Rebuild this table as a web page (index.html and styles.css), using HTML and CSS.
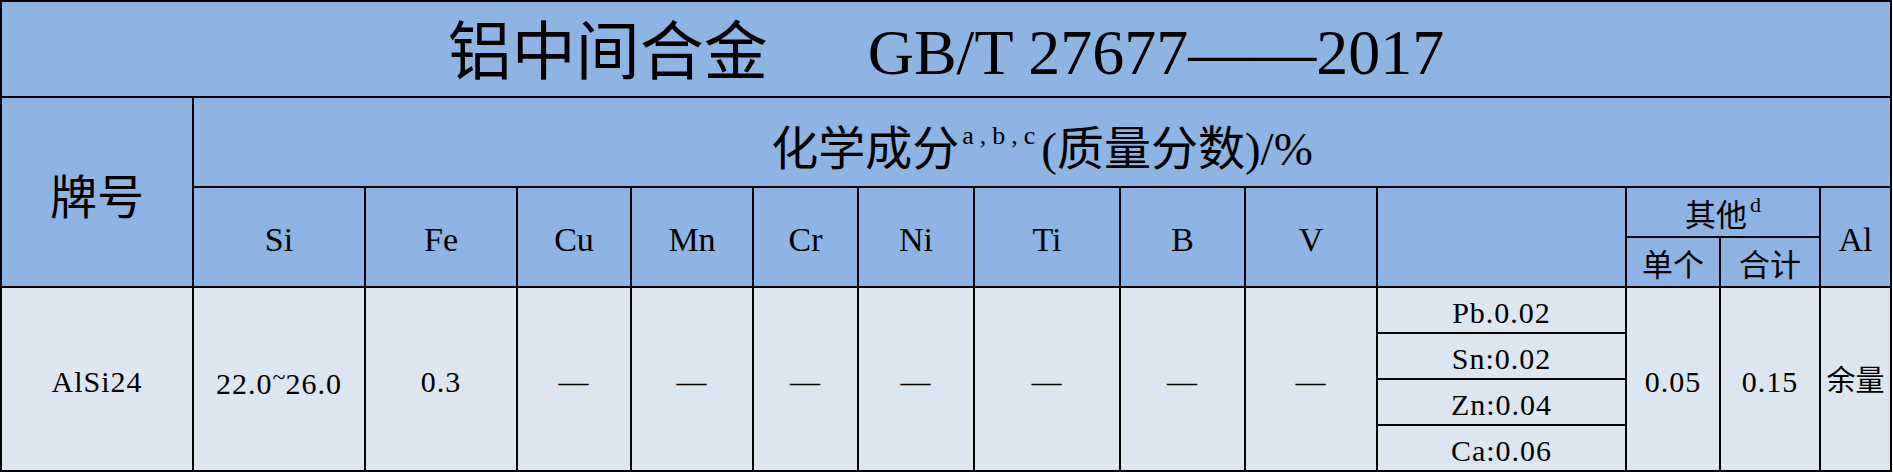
FILE: index.html
```html
<!DOCTYPE html>
<html lang="zh-CN">
<head>
<meta charset="utf-8">
<title>铝中间合金 GB/T 27677——2017</title>
<link rel="stylesheet" href="styles.css">
</head>
<body>
<div class="sheet">
  <div class="cell hd title c14"><span>铝中间合金</span><span>GB/T 27677——2017</span></div>

  <div class="cell hd big r3 up6">牌号</div>
  <div class="cell hd big c13 up8"><span>化学成分<span class="sup sup-abc">a,b,c</span>(质量分数)/%</span></div>

  <div class="cell hd col r2">Si</div>
  <div class="cell hd col r2">Fe</div>
  <div class="cell hd col r2">Cu</div>
  <div class="cell hd col r2">Mn</div>
  <div class="cell hd col r2">Cr</div>
  <div class="cell hd col r2">Ni</div>
  <div class="cell hd col r2">Ti</div>
  <div class="cell hd col r2">B</div>
  <div class="cell hd col r2">V</div>
  <div class="cell hd r2"></div>
  <div class="cell hd cjk c2"><span>其他<span class="sup sup-d">d</span></span></div>
  <div class="cell hd col r2">Al</div>
  <div class="cell hd cjk">单个</div>
  <div class="cell hd cjk">合计</div>

  <div class="cell dt r4">AlSi24</div>
  <div class="cell dt r4"><span>22.0<span class="tilde">~</span>26.0</span></div>
  <div class="cell dt r4">0.3</div>
  <div class="cell dt r4">—</div>
  <div class="cell dt r4">—</div>
  <div class="cell dt r4">—</div>
  <div class="cell dt r4">—</div>
  <div class="cell dt r4">—</div>
  <div class="cell dt r4">—</div>
  <div class="cell dt r4">—</div>
  <div class="cell dt">Pb.0.02</div>
  <div class="cell dt r4">0.05</div>
  <div class="cell dt r4">0.15</div>
  <div class="cell dt r4 cjkd">余量</div>
  <div class="cell dt">Sn:0.02</div>
  <div class="cell dt">Zn:0.04</div>
  <div class="cell dt">Ca:0.06</div>
</div>
</body>
</html>
```

FILE: styles.css
```css
html, body {
  margin: 0;
  padding: 0;
  background: #ffffff;
}

body {
  font-family: "Liberation Serif", "Noto Sans CJK SC", serif;
  color: #000000;
}

.sheet {
  width: 1892px;
  height: 472px;
  box-sizing: border-box;
  padding: 2px;
  display: grid;
  gap: 2px;
  background: #000000;
  grid-template-columns: 190px 170px 150px 112px 120px 103px 114px 144px 123px 130px 247px 92px 98px 69px;
  grid-template-rows: 94px 88px 48px 48px 44px 44px 44px 44px;
}

.cell {
  display: flex;
  align-items: center;
  justify-content: center;
  line-height: 1;
  white-space: nowrap;
  padding-top: 5px;
  box-sizing: border-box;
}

.hd {
  background: #8eb4e3;
}

.dt {
  background: #dce6f1;
  font-size: 30px;
  letter-spacing: 1px;
}

.c14 { grid-column: span 14; }
.c13 { grid-column: span 13; }
.c2 { grid-column: span 2; }
.r2 { grid-row: span 2; }
.r3 { grid-row: span 3; }
.r4 { grid-row: span 4; }

.title {
  font-size: 64px;
  gap: 100px;
  padding-top: 8px;
}

.big {
  font-size: 47px;
}

.up6 { padding-top: 12px; }
.up8 { padding-top: 14px; }

.col {
  font-size: 34px;
}

.cjk {
  font-size: 31px;
  padding-top: 7px;
}

.cjkd {
  font-size: 29px;
  letter-spacing: 0;
}

.sup {
  line-height: 0;
}

.sup-abc {
  font-size: 26px;
  letter-spacing: 6px;
  vertical-align: 21px;
  margin-left: 3px;
}

.sup-d {
  font-size: 22px;
  vertical-align: 14px;
  margin-left: 3px;
}

.tilde {
  display: inline-block;
  vertical-align: 9px;
  font-size: 24px;
  letter-spacing: 0;
}
```
